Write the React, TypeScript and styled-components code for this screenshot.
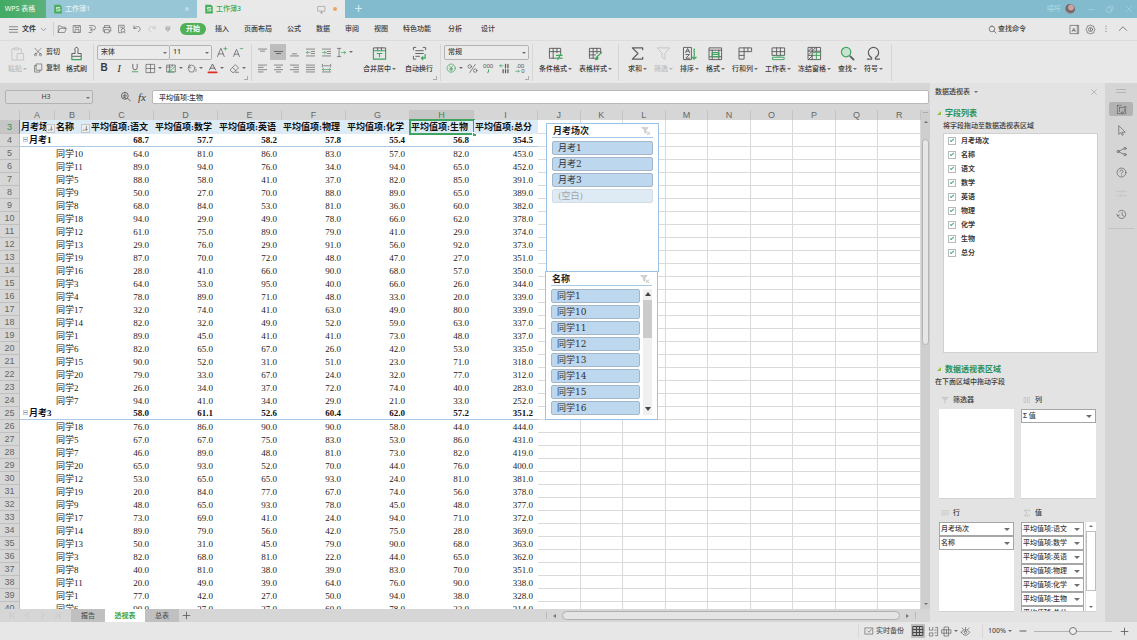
import React from "react";
import styled, { createGlobalStyle, css } from "styled-components";

const GREEN = "#3fa45f";
const INK = "#3a3a3a";
const UI = '"Noto Sans", "Noto Sans CJK SC", sans-serif';
const SHEET = '"Liberation Serif", "Noto Sans CJK SC", serif';

const Global = createGlobalStyle`
  *, *::before, *::after { box-sizing: border-box; }
  body { margin: 0; background: #e8e8e8; font-family: ${UI}; font-size: 7px; color: ${INK}; }
  button, input, select { font: inherit; color: inherit; border: 0; margin: 0; padding: 0; background: none; }
  h2, h3 { margin: 0; }
`;

/* ---------- icons ---------- */

const Svg = styled.svg<{ $s: number }>`
  display: block;
  flex: none;
  width: ${(p) => p.$s}px;
  height: ${(p) => p.$s}px;
  fill: none;
  stroke: #5d5d5d;
  stroke-width: 1;
  stroke-linecap: round;
  stroke-linejoin: round;
  .g { stroke: ${GREEN}; }
  .t { fill: #5d5d5d; stroke: none; font-family: "Liberation Sans", sans-serif; }
`;

const art: Record<string, React.ReactNode> = {
  menu: <path d="M2 4h12M2 8h12M2 12h12" />,
  chevron: <path d="M4 6l4 4 4-4" />,
  open: <path d="M2 13V3h4l1.500 2H13v2M2 13l2.500-6H15l-2.500 6z" />,
  save: <path d="M2.500 2.500h11v11h-11zM5 2.500v3h6v-3M5 13.500V8.500h6v5" />,
  exportDoc: <path d="M4 2.500h6a3.500 3.500 0 010 7H6M4 6h4M8 7.500l-2 2 2 2M3 13.500h4" />,
  print: <path d="M4 5.500v-3h8v3M4 11.500H2v-6h12v6h-2M4.500 9h7v5h-7z" />,
  preview: <path d="M8 14H2.500V2h9v4M5 5h4M13 14.500l-2-2M9.500 7a3 3 0 100 6 3 3 0 000-6z" />,
  undo: <path d="M3 3v4h4M3 7c2-4 10-4 10 1 0 2-1 3.500-3 4.500" />,
  redo: <path stroke="#bdbdbd" d="M13 3v4H9M13 7c-2-4-10-4-10 1 0 2 1 3.500 3 4.500" />,
  more: <path d="M4 4h8M4 7.500h8l-4 4.500z" />,
  search: <path strokeWidth="1.300" d="M7 2a5 5 0 100 10A5 5 0 007 2zM10.500 10.500l4 4" />,
  skin: <><path d="M2 2h12v12H2zM12 2v12" /><path d="M4.500 11l2.500-5 2 5M5.500 9.500h3" /></>,
  gear: <><path d="M8 1.500l2 1 2.500.5.500 2.500 1.500 2.500-1.500 2.500-.5 2.500-2.500.5-2 1-2-1-2.500-.5-.5-2.500L1.500 8 3 5.500 3.500 3 6 2.500z" /><circle cx="8" cy="8" r="3" /><path d="M8 6.500v3" /></>,
  dots: <path strokeWidth="1.500" strokeDasharray="0.100 4" d="M8 3.500v9" />,
  up: <path d="M3 10l5-5 5 5" />,
  paste: <g stroke="#c4c4c4"><path d="M5 3H2v12h5M5 2h4v2H5zM9 3h3v4M8 8h6.500v7H8z" /></g>,
  cut: <path d="M3 2l8.500 9M13 2l-8.500 9M4 10.500a1.800 1.800 0 100 3.600 1.800 1.800 0 000-3.600zM12 10.500a1.800 1.800 0 100 3.600 1.800 1.800 0 000-3.600z" />,
  copy: <path d="M5.500 1.500h8.500v10H5.500zM5.500 4H2.500v10.500h8.500v-3" />,
  brush: <><path d="M8 1.500c2 0 2 2 1.500 4V8H13v3H3V8h3.500V5.500C6 3.500 6 1.500 8 1.500z" /><path className="g" strokeWidth="1.300" d="M3 11v3.500h10V11" /></>,
  growA: <><path d="M2 14L6.500 3 11 14M3.500 10.500h6" /><path className="g" d="M10.500 3.500h4M12.500 1.500v4" /></>,
  shrinkA: <><path d="M2 14L6 4.500 10 14M3.500 11h5" /><path className="g" d="M11 3.500h3.500" /></>,
  underline: <><path strokeWidth="1.400" d="M4.500 2v5.500a3.500 3.500 0 007 0V2" /><path className="g" strokeWidth="1.400" d="M3.500 14h9" /></>,
  borders: <path d="M2 2h12v12H2zM8 2v12M2 8h12" />,
  fillPat: <><path d="M1.500 3h12v10h-12zM1.500 6h6M5 3v10M9 3v2" /><path className="g" strokeWidth="1.300" d="M7 11l6-6M3 13h8M6 9l-2 3" /></>,
  bucket: <path d="M3.500 6.500a5 5 0 019.500 0M13 6.500L11 13H5.500L3 8M5 2.500L3.500 6.500 7 7M14.500 9v3" />,
  fontColor: <><path strokeWidth="1.300" d="M3.500 10L8 1.500 12.500 10M5 7.500h6" /><path stroke="#e02b20" strokeWidth="2.600" d="M2 13.500h12" /></>,
  eraser: <path d="M2 9.500L9 2.500l5 4.500-6.500 6.500H5zM5 6.500l5 4.500M9 13.500h5" />,
  vTop: <path d="M2 3h12M5 6h6" />,
  vMid: <path strokeWidth="1.300" d="M2 6.500h12M5 9.500h6" />,
  vBot: <path d="M5 10h6M2 13h12" />,
  indentL: <><path d="M2 3h12M9 6.500h5M9 9.500h5M2 13h12" /><path className="g" d="M7 8H2M4 6L2 8l2 2" /></>,
  indentR: <><path d="M2 3h12M9 6.500h5M9 9.500h5M2 13h12" /><path className="g" d="M2 8h5M5 6l2 2-2 2" /></>,
  orient: <><path d="M2 2h5M4.500 2v12M2 14h5" /><path className="g" d="M8 8h6M12 6l2 2-2 2" /></>,
  left: <path d="M2 3h12M2 6.300h7M2 9.700h12M2 13h7" />,
  center: <path d="M2 3h12M5 6.300h6M2 9.700h12M5 13h6" />,
  right: <path d="M2 3h12M7 6.300h7M2 9.700h12M7 13h7" />,
  justify: <path d="M2 3h12M2 6.300h12M2 9.700h12M2 13h12" />,
  distribute: <><path d="M2 2v4M14 2v4M4 4h8M2 13h12" /><path className="g" d="M2 9.500h12M4 8L2 9.500 4 11M12 8l2 1.500-2 1.500" /></>,
  merge: <><path d="M1.500 5V2h13v3M6 2v3M10 2v3" /><path className="g" strokeWidth="1.200" d="M1.500 5h13v9h-13zM5.500 8h5M8 8v3.500" /></>,
  wrap: <><path d="M1.500 4V1.500H4M12 1.500h2.500V4M1.500 11v3H4M4 5h8M4 8h8M4 11h4" /><path className="g" strokeWidth="1.300" d="M14 9v4h-4M11.500 11.500L10 13l1.500 1.500" /></>,
  currency: <><circle className="g" cx="7.500" cy="7.500" r="6" /><path className="g" d="M5 4l2.500 3L10 4M7.500 7v5M5.500 8h4M5.500 10h4" /></>,
  percent: <><circle cx="4" cy="5" r="2.500" /><circle cx="12" cy="11" r="2.500" /><path d="M12 2L4 14" /></>,
  thousands: <><text className="t" x="0" y="7" fontSize="9">000</text><path className="g" strokeWidth="1.500" d="M8 10v2l-1 2" /></>,
  decMore: <><path className="g" d="M1 4h5M3 2L1 4l2 2" /><path strokeDasharray="5 2.500" strokeWidth="1.800" d="M9.500 2v12M13 2v12M6 9.500v4.500" /></>,
  decLess: <><text className="t" x="1" y="7" fontSize="9">.00</text><text className="t" x="9" y="15" fontSize="9">0</text><path className="g" d="M1 12h5M4.500 10.500L6 12l-1.500 1.500" /></>,
  condFmt: <><path d="M8 13H1.500V2.500h12V8M1.500 6h12M5.500 2.500V13M9.500 2.500V7" /><path className="g" strokeWidth="1.300" d="M9 10h6M9 13h6M13.500 8.500l-3 6" /></>,
  tblStyle: <><path d="M7 13H1.500V2.500h12V7M1.500 6h12M1.500 9.500H8M5.500 2.500V13M9.500 2.500V8" /><path className="g" strokeWidth="1.300" d="M9 12l5.500-5M8 14.500c0-2 1-2.500 2-2.500s1 2.500-2 2.500z" /></>,
  sum: <path strokeWidth="1.300" d="M13.500 4V2H2.500l6 6-6 6h11v-2" />,
  filter: <path stroke="#c4c4c4" d="M1.500 2h13L9.500 8v6l-3-2V8z" />,
  sort: <><path d="M2 1.500h8v13H2z" /><path d="M4 7l2-4.500L8 7M4.500 5.500h3M4 9h4l-4 4h4" /><path className="g" strokeWidth="1.300" d="M13 3v11M11 12l2 2 2-2" /></>,
  format: <><path d="M1.500 2h13v12.500h-13zM1.500 4.500h13M4.500 4.500v10M11.500 4.500v10M1.500 11.500h13" /><path className="g" strokeWidth="1.200" d="M4.500 7h7v4.500h-7zM4.500 9h7" /></>,
  rowCol: <path d="M1.500 2h13v4h-8v8h-5zM1.500 6h5M6.500 2v4M10.500 2v4M1.500 10h5" />,
  worksheet: <><path d="M1.500 2h13v8h-13zM1.500 6h13M6 2v8M10 2v8" /><path className="g" d="M2 12h12v2.500H2zM6 10.500h5" /></>,
  freeze: <><path d="M1.500 1.500h13v13h-13zM1.500 5.500h13M1.500 10h5M5.500 1.500v13M10 1.500v4M2 5l3-3M6 5l3-3M2 9l3-3M2 14l3-3" /><path className="g" d="M6.500 7h8M6.500 10h8M10 7v7" /></>,
  find: <><circle className="g" cx="6.500" cy="6.500" r="5" fill="#c9e3d1" strokeWidth="1.300" /><path strokeWidth="2" d="M11 11l3.500 3.500" /></>,
  symbol: <path strokeWidth="1.200" d="M1.500 14H6v-1.500C3.500 11 2.500 9 2.500 7a5.500 5.500 0 0111 0c0 2-1 4-3.500 5.500V14h4.500" />,
  zoomDoc: <path strokeWidth="1.300" d="M7 2a5 5 0 100 10A5 5 0 007 2zM11 10.500l4 4M4.500 7h5M7 4.500v5M5 9l4 2" />,
  wpsDoc: <><path fill="#44ad58" stroke="none" d="M2 1h9l3 3v11H2z" /><path stroke="#e9f5ec" strokeWidth="1.400" d="M11 5.500H5.500V8H11v3H5.500" /></>,
  monitor: <path stroke="#8c8c8c" d="M2 2.500h12v8.500H2zM6 14h4M8 11v3" />,
  pivot: <><path strokeDasharray="2 1.500" d="M2 2h6M2 2v12M14 8v6H2" /><path d="M5 5h5M5 5v6M9 13c4 0 4-4 4-9M11 5.500L13 3l2 2.500M9 11l-2 2 2 1.500" /></>,
  cursor: <path d="M4 1.500v12l3-2.500 2 4 1.500-1-1.500-3.500h4z" />,
  share: <><circle cx="3" cy="8" r="1.700" /><circle cx="13" cy="3.500" r="1.700" /><circle cx="13" cy="12.500" r="1.700" /><path d="M4.500 7.300L11.500 4M4.500 8.700L11.500 12" /></>,
  help: <><circle cx="8" cy="8" r="6.500" /><path d="M5.700 6.500c0-3 4.600-3 4.600 0C10.300 8 8 8 8 9.700M8 11.700v.2" /></>,
  sliders: <path stroke="#bfbfbf" d="M1 5h9M13 5h2M10 3v4M1 11h2M6 11h9M6 9v4" />,
  history: <path d="M3.500 4a6 6 0 11-1 6M1 7.500L2.500 10 5 8.500M9 5v4l2.500 1.500" />,
  clearFilter: <><path stroke="#c2c2c2" fill="#d4d4d4" d="M1.500 2.500h10L8 6.500V12L5.500 10V6.500z" /><path stroke="#b4b4b4" strokeWidth="1.300" d="M10 9.500l4 4.500M14 9.500L10 14" /></>,
  clock: <path d="M2 3h12v10H2zM6 8l2 2 4-5" />,
  gridView: <path stroke="#444" strokeWidth="1.300" d="M1.500 2h13v12h-13zM1.500 6h13M1.500 10h13M6 2v12M10 2v12" />,
  pageView: <path d="M2 2v4h5V2M2 14v-4h5v4zM11 2h3v12h-3M10 6h2M10 10h2" />,
  splitView: <path d="M5 1.500h6v13H5zM1.500 5.500h13v5h-13zM8 5.500v5" />,
  eye: <path d="M2 9c3-5 9-5 12 0-3 6-9 6-12 0zM8 7a2 2 0 100 4 2 2 0 000-4zM3 3l2 2M13 3l-2 2M8 2v2" />,
  first: <path stroke="#bbb" d="M4 3v10M12 3L7 8l5 5" />,
  prev: <path stroke="#bbb" d="M10 3L5 8l5 5" />,
  next: <path stroke="#bbb" d="M6 3l5 5-5 5" />,
  last: <path stroke="#bbb" d="M4 3l5 5-5 5M12 3v10" />,
  plus: <path strokeWidth="1.500" d="M8 2v12M2 8h12" />,
  minus: <path strokeWidth="2" d="M2 8h12" />,
  winMin: <path stroke="#b5dbe6" d="M2 9h12" />,
  winMax: <path stroke="#b5dbe6" d="M2 5.500h8.500V14H2zM5.500 5V2H14v8.500h-3" />,
  winClose: <path stroke="#b5dbe6" d="M3 3l10 10M13 3L3 13" />,
  close: <path stroke="#8f8f8f" d="M3 3l10 10M13 3L3 13" />,
  funnel: <path stroke="#b9b9b9" strokeWidth="1.500" d="M2 3h12M4 6h8M8 6v8" />,
  cols: <path stroke="#c2c2c2" strokeWidth="1.500" d="M3 3h3v10H3zM10 3h3v10h-3z" />,
  rows: <path stroke="#bcbcbc" d="M1 3h14M1 6h14M1 9h14M1 12h14" />,
  sigma: <path stroke="#b9b9b9" strokeWidth="1.500" d="M13 4V2.500H3L8 8l-5 5.500h10V12" />,
  sortDown: <path stroke="#666" strokeWidth="1.600" d="M10 3v9M7.500 9.500L10 12l2.500-2.500M3 12h2" />,
};

const Icon = ({ n, s = 12 }: { n: string; s?: number }) => (
  <Svg $s={s} viewBox="0 0 16 16" aria-hidden="true">{art[n]}</Svg>
);

const Caret = styled.span<{ $up?: boolean; $big?: boolean; $dim?: boolean }>`
  flex: none;
  width: 0;
  height: 0;
  border: ${(p) => (p.$big ? 3 : 2)}px solid transparent;
  ${(p) => (p.$up ? "border-bottom" : "border-top")}-color: ${(p) => (p.$dim ? "#b5b5b5" : "#6e6e6e")};
  ${(p) => (p.$up ? "border-top" : "border-bottom")}-width: 0;
`;

const SideCaret = styled.span<{ $right?: boolean }>`
  width: 0;
  height: 0;
  border: 2px solid transparent;
  ${(p) => (p.$right ? "border-left" : "border-right")}: 3px solid #777;
  ${(p) => (p.$right ? "border-right" : "border-left")}-width: 0;
`;

/* ---------- frame ---------- */

const App = styled.div`
  display: flex;
  flex-direction: column;
  height: 100vh;
  overflow: hidden;
  line-height: 10px;
`;

const TitleBar = styled.header`
  display: flex;
  flex: none;
  height: 18px;
  background: #82bbcd;
`;

const HomeTab = styled.button`
  width: 46px;
  padding-right: 6px;
  color: #e2f3e6;
  background: linear-gradient(90deg, #41aa63, #5bb27b);
  font-weight: 500;
`;

const BookTab = styled.button<{ $active?: boolean }>`
  display: flex;
  align-items: center;
  gap: 2px;
  width: ${(p) => (p.$active ? 148 : 151)}px;
  padding: 0 8px 0 7px;
  background: ${(p) => (p.$active ? "#e9e9e9" : "#97c6d6")};
  color: ${(p) => (p.$active ? "#3fa94f" : "#e4f2f6")};
  font-weight: 500;
`;

const TabState = styled.span`
  display: flex;
  align-items: center;
  gap: 7px;
  margin-left: auto;
`;

const Dot = styled.span<{ $c: string }>`
  width: 4px;
  height: 4px;
  border-radius: 50%;
  background: ${(p) => p.$c};
`;

const AddBook = styled.button`
  width: 27px;
  color: #d6ecf2;
  font-size: 14px;
  line-height: 18px;
`;

const WindowTools = styled.div`
  display: flex;
  align-items: center;
  gap: 9px;
  margin-left: auto;
  padding-right: 3px;
  color: #b5dbe6;
`;

const User = styled.span`
  display: flex;
  align-items: center;
  gap: 4px;
  margin-right: 2px;
`;

const Avatar = styled.span`
  width: 10px;
  height: 10px;
  border-radius: 50%;
  background: radial-gradient(circle at 60% 35%, #c9a6a0 0 25%, #6b5a60 45%, #b9b3b6 90%);
`;

const IconButton = styled.button<{ $on?: boolean; $w?: number }>`
  display: flex;
  flex: none;
  align-items: center;
  justify-content: center;
  gap: 2px;
  width: ${(p) => p.$w ?? 10}px;
  align-self: stretch;
  ${(p) => p.$on && css`background: #bdbdbd; border-radius: 1px;`}
`;

const MenuBar = styled.nav`
  display: flex;
  flex: none;
  align-items: center;
  height: 23px;
  padding: 0 8px;
  background: #e8e8e8;
  border-bottom: 1px solid #dcdcdc;
  font-weight: 500;
`;

const FileMenu = styled.button`
  display: flex;
  align-items: center;
  gap: 3px;
  height: 14px;
  padding-right: 5px;
  border-right: 1px solid #cfcfcf;
  font-weight: 700;
`;

const QuickTools = styled.div`
  display: flex;
  gap: 5px;
  padding: 0 6px 0 3px;
`;

const RibbonTabs = styled.div`
  display: flex;
  align-items: center;
  gap: 15px;
`;

const RibbonTab = styled.button<{ $context?: boolean; $active?: boolean }>`
  padding: 0 ${(p) => (p.$context ? 2 : 0)}px;
  font-weight: 500;
  ${(p) =>
    p.$active &&
    css`
      height: 12px;
      margin-right: -6px;
      padding: 0 6px;
      border-radius: 6px;
      background: #4fb054;
      color: #fff;
      font-weight: 700;
    `}
`;

const MenuTools = styled.div`
  display: flex;
  align-items: center;
  gap: 6px;
  margin-left: auto;
`;

const FindCommand = styled.button`
  display: flex;
  align-items: center;
  gap: 1px;
  margin-right: 37px;
  font-weight: 500;
`;

/* ---------- ribbon ---------- */

const Ribbon = styled.div`
  display: flex;
  flex: none;
  height: 42px;
  padding: 3px 0 2px 4px;
  background: #e8e8e8;
  font-weight: 500;
`;

const Group = styled.section<{ $gap?: number; $pad?: string; $launcher?: boolean }>`
  position: relative;
  display: flex;
  flex: none;
  gap: ${(p) => p.$gap ?? 0}px;
  padding: ${(p) => p.$pad ?? "0 6px"};
  border-right: 1px solid #d6d6d6;
  ${(p) =>
    p.$launcher &&
    css`
      &::after {
        content: "";
        position: absolute;
        right: 3px;
        bottom: 1px;
        width: 4px;
        height: 4px;
        border: solid #aaa;
        border-width: 0 1px 1px 0;
      }
    `}
`;

const Tall = styled.button<{ $off?: boolean }>`
  display: flex;
  flex: none;
  flex-direction: column;
  align-items: center;
  gap: 3px;
  padding-top: 2px;
  font-weight: 500;
  color: ${(p) => (p.$off ? "#bcbcbc" : INK)};
  align-self: flex-start;
`;

const Label = styled.span`
  display: flex;
  align-items: center;
  gap: 1px;
  white-space: nowrap;
`;

const Stack = styled.div`
  display: flex;
  flex: none;
  flex-direction: column;
`;

const Line = styled.div`
  display: flex;
  align-items: center;
  height: 16px;
`;

const Inline = styled.button`
  display: flex;
  align-items: center;
  gap: 3px;
  height: 16px;
  font-weight: 500;
`;

const Combo = styled.span<{ $w: number; $join?: boolean }>`
  position: relative;
  display: flex;
  align-items: center;
  flex: none;
  width: ${(p) => p.$w}px;
  height: 15px;
  border: 1px solid #b3b3b3;
  border-left-width: ${(p) => (p.$join ? 0 : 1)}px;
  border-radius: ${(p) => (p.$join ? "0 2px 2px 0" : "2px")};
  background: #ebebeb;
  select, input {
    appearance: none;
    width: 100%;
    height: 100%;
    padding-left: 3px;
    outline: 0;
  }
  input { text-align: center; padding: 0 6px 0 0; }
  ${Caret} { position: absolute; right: 2px; top: 6px; pointer-events: none; }
`;

const Glyph = styled.span<{ $i?: boolean }>`
  font: ${(p) => (p.$i ? 'italic 400 11px/12px "Liberation Serif", serif' : '700 10px/12px "Liberation Sans", sans-serif')};
`;

const BigButton = ({ icon, text, caret = true, off }: { icon: string; text: string; caret?: boolean; off?: boolean }) => (
  <Tall $off={off}>
    <Icon n={icon} s={15} />
    <Label>{text}{caret && <Caret $dim={off} />}</Label>
  </Tall>
);

const Tool = ({ n, w = 16, caret, on, s = 11 }: { n: string; w?: number; caret?: boolean; on?: boolean; s?: number }) => (
  <IconButton $w={w} $on={on} aria-label={n}>
    <Icon n={n} s={s} />
    {caret && <Caret />}
  </IconButton>
);

/* ---------- workspace ---------- */

const Workspace = styled.div`
  display: flex;
  flex: 1;
  min-height: 0;
  background: #d6d6d6;
`;

const BookArea = styled.main`
  display: flex;
  flex: 1;
  flex-direction: column;
  min-width: 0;
`;

const FormulaBar = styled.div`
  display: flex;
  align-items: center;
  flex: none;
  height: 27px;
  padding: 0 1px 0 5px;
  ${Combo} { height: 14px; background: #dadada; }
`;

const FormulaTools = styled.div`
  display: flex;
  align-items: center;
  gap: 5px;
  margin-left: 27px;
`;

const FormulaInput = styled.input`
  flex: 1;
  height: 14px;
  margin-left: 4px;
  padding: 0 6px;
  border: 1px solid #b9b9b9;
  border-radius: 2px;
  background: #fff;
  font-weight: 500;
`;

const SheetRow = styled.div`
  display: flex;
  flex: 1;
  min-height: 0;
`;

const Viewport = styled.div`
  position: relative;
  flex: 1;
  min-width: 0;
  overflow: hidden;
  background: #fff;
`;

const Grid = styled.table`
  width: 100%;
  table-layout: fixed;
  border-spacing: 0;
  font: 9px/12px ${SHEET};
  color: #222;
`;

const ColHead = styled.th<{ $on?: boolean }>`
  height: 10px;
  padding: 0;
  background: ${(p) => (p.$on ? "#c6c6c6" : "#d6d6d6")};
  border-right: 1px solid #c4c4c4;
  color: ${(p) => (p.$on ? "#2f8f4c" : "#666")};
  font: 9px/10px "Liberation Sans", sans-serif;
`;

const RowHead = styled.th<{ $on?: boolean }>`
  padding: 0;
  background: ${(p) => (p.$on ? "#c6c6c6" : "#d6d6d6")};
  border-bottom: 1px solid #c0c0c0;
  border-right: 1px solid ${(p) => (p.$on ? GREEN : "#bdbdbd")};
  color: ${(p) => (p.$on ? "#2f8f4c" : "#666")};
  font: 9px/12px "Liberation Sans", sans-serif;
`;

const Row = styled.tr<{ $kind?: "head" | "group" }>`
  height: ${(p) => (p.$kind === "head" ? 14 : 13)}px;
  ${(p) => p.$kind && css`font-weight: 700; color: #111;`}
`;

const Cell = styled.td<{ $kind?: string; $num?: boolean; $empty?: boolean; $picked?: boolean }>`
  position: relative;
  padding: 0 ${(p) => (p.$num ? 5 : 0)}px 0 ${(p) => (p.$num ? 0 : 1)}px;
  text-align: ${(p) => (p.$num ? "right" : "left")};
  white-space: nowrap;
  background: ${(p) => (p.$kind === "head" ? "#ddebf7" : "transparent")};
  ${(p) => p.$kind === "group" && css`border-bottom: 1px solid #a9c9e6;`}
  ${(p) => p.$empty && css`
    background: #fff;
    border-right: 1px solid #dadada;
    border-bottom: 1px solid #dadada;
  `}
  ${(p) => p.$picked && css`
    box-shadow: inset 0 0 0 1px #3fa45f;
    outline: 1px solid #3fa45f;
    &::after {
      content: "";
      position: absolute;
      right: -2px;
      bottom: -2px;
      width: 4px;
      height: 4px;
      background: #3fa45f;
      border: solid #fff;
      border-width: 1px 0 0 1px;
    }
  `}
`;

const SortButton = styled.button`
  position: absolute;
  right: 0;
  bottom: 1px;
  width: 9px;
  height: 9px;
  border: 1px solid #c5c5c5;
  background: #efefef;
`;

const Toggle = styled.button`
  position: relative;
  width: 5px;
  height: 5px;
  margin: 0 1px 2px 2px;
  border: 1px solid #b9cfe3;
  vertical-align: middle;
  &::after {
    content: "";
    position: absolute;
    inset: 1px 0 auto;
    height: 1px;
    background: #7d8fa0;
  }
`;

const Slicer = styled.section<{ $x: number; $y: number }>`
  position: absolute;
  left: ${(p) => p.$x}px;
  top: ${(p) => p.$y}px;
  display: flex;
  flex-direction: column;
  width: 113px;
  height: 149px;
  padding: 1px 5px 4px;
  border: 1px solid #9cc3e5;
  background: #fff;
`;

const SlicerTitle = styled.h3`
  display: flex;
  align-items: center;
  justify-content: space-between;
  flex: none;
  height: 13px;
  padding: 0 2px 0 1px;
  border-bottom: 1px solid #a5c8e8;
  font: 700 9px/12px ${SHEET};
  color: #222;
`;

const SlicerBody = styled.div`
  display: flex;
  justify-content: space-between;
  flex: 1;
  min-height: 0;
  margin-top: 3px;
`;

const SlicerItems = styled.div`
  display: flex;
  flex: 1;
  flex-direction: column;
  gap: 2px;
  overflow: hidden;
`;

const SlicerItem = styled.button<{ $off?: boolean }>`
  flex: none;
  height: 14px;
  padding-left: 5px;
  border: 1px solid ${(p) => (p.$off ? "#d3dde6" : "#a3b7c9")};
  border-radius: 2px;
  background: ${(p) => (p.$off ? "#deebf5" : "#bdd7ee")};
  color: ${(p) => (p.$off ? "#a5a5a5" : "#333")};
  font: 9px/12px "DejaVu Serif", "Noto Sans CJK SC", serif;
  text-align: left;
`;

const SlicerScroll = styled.div`
  display: flex;
  flex-direction: column;
  align-items: center;
  width: 9px;
  margin-left: 3px;
  padding: 3px 0 4px;
  background: #f0f0f0;
  i { flex: none; width: 9px; height: 38px; margin: 4px 0 auto; background: #cbcbcb; }
  ${Caret} { border-width: 3px; border-top-color: #444; border-bottom-color: transparent; border-bottom-width: 0; border-top-width: 4px; }
  ${Caret}:first-child { border-bottom: 4px solid #444; border-top-width: 0; }
`;

const VScroll = styled.div`
  display: flex;
  flex: none;
  flex-direction: column;
  align-items: center;
  width: 9px;
  padding: 2px 0 4px;
  background: #cecece;
  hr { width: 5px; margin: 0 0 8px; border: 0; border-top: 1px solid #aaa; }
  i { flex: none; width: 7px; height: 206px; margin: 16px 0 auto; border: 1px solid #b5b5b5; border-radius: 4px; background: #e6e6e6; }
`;

const SheetBar = styled.div`
  display: flex;
  flex: none;
  align-items: stretch;
  height: 13px;
`;

const SheetNav = styled.div`
  display: flex;
  gap: 5px;
  width: 71px;
  padding-left: 7px;
`;

const SheetTab = styled.button<{ $active?: boolean }>`
  width: ${(p) => (p.$active ? 40 : 34)}px;
  background: ${(p) => (p.$active ? "#fff" : "#c0c0c0")};
  color: ${(p) => (p.$active ? "#37a447" : "#555")};
  font-weight: ${(p) => (p.$active ? 700 : 500)};
`;

const HScroll = styled.div`
  display: flex;
  align-items: center;
  gap: 6px;
  width: 392px;
  margin-left: auto;
  padding: 0 14px 0 8px;
  hr { width: 1px; height: 7px; margin: 0; border: 0; background: #bbb; }
  i { flex: 1; height: 9px; border: 1px solid #b0b0b0; border-radius: 5px; background: #e4e4e4; }
`;

/* ---------- pivot pane ---------- */

const Pane = styled.aside`
  flex: none;
  width: 175px;
  padding: 4px 7px 0 5px;
  background: #e3e3e3;
  font-weight: 500;
`;

const PaneHead = styled.div`
  display: flex;
  align-items: center;
  justify-content: space-between;
  height: 10px;
`;

const PaneTitle = styled.h2`
  display: flex;
  align-items: center;
  gap: 4px;
  font: 500 7px/10px ${UI};
`;

const SectionTitle = styled.h3`
  display: flex;
  align-items: center;
  gap: 4px;
  height: 12px;
  margin-top: 10px;
  padding-left: 2px;
  font: 700 8px/12px ${UI};
  color: #27905a;
  &::before {
    content: "";
    border: solid transparent;
    border-width: 0 0 4px 4px;
    border-bottom-color: #8cc63f;
  }
`;

const Hint = styled.p<{ $in?: boolean }>`
  margin: 0;
  padding-left: ${(p) => (p.$in ? 8 : 0)}px;
  line-height: 14px;
`;

const FieldList = styled.div`
  height: 220px;
  margin-left: 8px;
  padding: 0 4px;
  border: 1px solid #d0d0d0;
  background: #fff;
`;

const Field = styled.label`
  display: flex;
  align-items: center;
  gap: 5px;
  height: 14px;
  font-weight: 700;
  input {
    appearance: none;
    position: relative;
    width: 8px;
    height: 8px;
    border: 1px solid #b9b9b9;
    background: #fff;
  }
  input:checked::after {
    content: "";
    position: absolute;
    left: 2px;
    top: 0;
    width: 2px;
    height: 4px;
    border: solid #3fa477;
    border-width: 0 1px 1px 0;
    transform: rotate(45deg);
  }
`;

const Areas = styled.div`
  display: grid;
  grid-template-columns: 75px 75px;
  column-gap: 7px;
  margin-top: 6px;
  padding-left: 4px;
`;

const AreaHead = styled.h3`
  display: flex;
  align-items: center;
  gap: 4px;
  height: 10px;
  margin-bottom: 4px;
  padding-left: 2px;
  font: 500 7px/10px ${UI};
`;

const AreaBox = styled.div`
  display: flex;
  height: 90px;
  margin-bottom: 9px;
  border-bottom: 1px solid #d2d2d2;
  background: #fff;
  overflow: hidden;
`;

const Chips = styled.div`
  display: flex;
  flex: 1;
  flex-direction: column;
  min-width: 0;
`;

const Chip = styled.button`
  display: flex;
  flex: none;
  align-items: center;
  justify-content: space-between;
  height: 14px;
  padding: 0 3px 0 1px;
  border: 1px solid #a6a6a6;
  background: #fff;
  white-space: nowrap;
  font-weight: 500;
`;

const AreaScroll = styled.div`
  display: flex;
  flex-direction: column;
  align-items: center;
  justify-content: space-between;
  width: 11px;
  margin-left: 1px;
  padding: 3px 0;
  border-left: 1px solid #ddd;
  i { width: 10px; height: 60px; margin: 4px 0 auto; border: 1px solid #bdbdbd; background: #fff; }
`;

const Rail = styled.aside`
  display: flex;
  flex: none;
  flex-direction: column;
  align-items: center;
  gap: 7px;
  width: 32px;
  padding-top: 6px;
  background: #d5d5d5;
`;

const RailGrip = styled.span`
  width: 10px;
  height: 4px;
  margin-bottom: 2px;
  border: solid #b5b5b5;
  border-width: 1px 0;
`;

const RailButton = styled.button<{ $on?: boolean }>`
  display: grid;
  place-items: center;
  width: 24px;
  height: 14px;
  border-radius: 2px;
  background: ${(p) => (p.$on ? "#b3b3b3" : "transparent")};
`;

const RailRule = styled.hr`
  width: 26px;
  margin: 0;
  border: 0;
  border-top: 1px solid #c2c2c2;
`;

/* ---------- status bar ---------- */

const StatusBar = styled.footer`
  display: flex;
  flex: none;
  align-items: center;
  justify-content: flex-end;
  gap: 7px;
  height: 18px;
  padding: 2px 8px 2px 0;
  background: #e7e7e7;
`;

const ViewModes = styled.div`
  display: flex;
  align-self: stretch;
  gap: 3px;
  padding-right: 5px;
`;

const StatusButton = styled.button`
  display: flex;
  align-items: center;
  gap: 2px;
  padding-left: 5px;
  color: #555;
  border-left: 1px solid #d8d8d8;
  align-self: stretch;
  font-weight: 500;
`;

const ZoomRange = styled.input`
  appearance: none;
  width: 78px;
  height: 9px;
  background: linear-gradient(#b5b5b5, #b5b5b5) center / 100% 1px no-repeat;
  &::-webkit-slider-thumb {
    appearance: none;
    width: 8px;
    height: 8px;
    border: 1px solid #777;
    border-radius: 50%;
    background: #efefef;
  }
`;

/* ---------- data ---------- */

const subjects = ["语文", "数学", "英语", "物理", "化学", "生物", "总分"];
const letters = "ABCDEFGHIJKLMNOPQR".split("");
const blankCols = letters.slice(9);

type Rec = [string, number[], boolean?];
const records: Rec[] = [
  ["月考1", [68.7, 57.7, 58.2, 57.8, 55.4, 56.8, 354.5], true],
  ["同学10", [64, 81, 86, 83, 57, 82, 453]],
  ["同学11", [89, 94, 76, 34, 94, 65, 452]],
  ["同学5", [88, 58, 41, 37, 82, 85, 391]],
  ["同学9", [50, 27, 70, 88, 89, 65, 389]],
  ["同学8", [68, 84, 53, 81, 36, 60, 382]],
  ["同学18", [94, 29, 49, 78, 66, 62, 378]],
  ["同学12", [61, 75, 89, 79, 41, 29, 374]],
  ["同学13", [29, 76, 29, 91, 56, 92, 373]],
  ["同学19", [87, 70, 72, 48, 47, 27, 351]],
  ["同学16", [28, 41, 66, 90, 68, 57, 350]],
  ["同学3", [64, 53, 95, 40, 66, 26, 344]],
  ["同学4", [78, 89, 71, 48, 33, 20, 339]],
  ["同学17", [32, 74, 41, 63, 49, 80, 339]],
  ["同学14", [82, 32, 49, 52, 59, 63, 337]],
  ["同学1", [89, 45, 41, 41, 73, 48, 337]],
  ["同学6", [82, 65, 67, 26, 42, 53, 335]],
  ["同学15", [90, 52, 31, 51, 23, 71, 318]],
  ["同学20", [79, 33, 67, 24, 32, 77, 312]],
  ["同学2", [26, 34, 37, 72, 74, 40, 283]],
  ["同学7", [94, 41, 34, 29, 21, 33, 252]],
  ["月考3", [58, 61.1, 52.6, 60.4, 62, 57.2, 351.2], true],
  ["同学18", [76, 86, 90, 90, 58, 44, 444]],
  ["同学5", [67, 67, 75, 83, 53, 86, 431]],
  ["同学7", [46, 89, 48, 81, 73, 82, 419]],
  ["同学20", [65, 93, 52, 70, 44, 76, 400]],
  ["同学12", [53, 65, 65, 93, 24, 81, 381]],
  ["同学19", [20, 84, 77, 67, 74, 56, 378]],
  ["同学9", [48, 65, 93, 78, 45, 48, 377]],
  ["同学17", [73, 69, 41, 24, 94, 71, 372]],
  ["同学14", [89, 79, 56, 42, 75, 28, 369]],
  ["同学13", [50, 31, 45, 79, 90, 68, 363]],
  ["同学3", [82, 68, 81, 22, 44, 65, 362]],
  ["同学8", [40, 81, 38, 39, 83, 70, 351]],
  ["同学11", [20, 49, 39, 64, 76, 90, 338]],
  ["同学1", [77, 42, 27, 50, 94, 38, 328]],
  ["同学6", [90, 37, 27, 60, 78, 22, 314]],
];

const PivotGrid = () => (
  <Grid>
    <colgroup>
      <col width="20" />
      <col width="35" />
      <col width="35" />
      {subjects.map((s) => <col key={s} width="64" />)}
      {blankCols.map((c) => <col key={c} />)}
    </colgroup>
    <thead>
      <tr>
        <ColHead />
        {letters.map((l) => <ColHead key={l} $on={l === "H"}>{l}</ColHead>)}
      </tr>
    </thead>
    <tbody>
      <Row $kind="head">
        <RowHead $on>3</RowHead>
        <Cell $kind="head">月考场<SortButton aria-label="月考场次"><Icon n="sortDown" s={7} /></SortButton></Cell>
        <Cell $kind="head">名称<SortButton aria-label="名称"><Icon n="sortDown" s={7} /></SortButton></Cell>
        {subjects.map((s) => <Cell key={s} $kind="head" $picked={s === "生物"}>平均值项:{s}</Cell>)}
        {blankCols.map((c) => <Cell key={c} $empty />)}
      </Row>
      {records.map(([name, values, group], i) => (
        <Row key={i} $kind={group ? "group" : undefined}>
          <RowHead>{i + 4}</RowHead>
          <Cell $kind={group ? "group" : undefined}>{group && <><Toggle aria-label="折叠" />{name}</>}</Cell>
          <Cell $kind={group ? "group" : undefined}>{!group && name}</Cell>
          {values.map((v, j) => <Cell key={j} $num $kind={group ? "group" : undefined}>{v.toFixed(1)}</Cell>)}
          {blankCols.map((c) => <Cell key={c} $empty />)}
        </Row>
      ))}
    </tbody>
  </Grid>
);

const ribbonRight: [string, string, boolean?][] = [
  ["sum", "求和"], ["filter", "筛选", true], ["sort", "排序"], ["format", "格式"], ["rowCol", "行和列"],
  ["worksheet", "工作表"], ["freeze", "冻结窗格"], ["find", "查找"], ["symbol", "符号"],
];

export default function Spreadsheet() {
  return (
    <App>
      <Global />
      <TitleBar>
        <HomeTab>WPS 表格</HomeTab>
        <BookTab><Icon n="wpsDoc" s={10} />工作薄1<TabState><Dot $c="#b9dbe6" /></TabState></BookTab>
        <BookTab $active><Icon n="wpsDoc" s={10} />工作薄3<TabState><Icon n="monitor" s={9} /><Dot $c="#e9a86a" /></TabState></BookTab>
        <AddBook aria-label="新建">+</AddBook>
        <WindowTools>
          <User>嘻吁<Avatar /></User>
          <Tool n="winMin" w={10} s={8} />
          <Tool n="winMax" w={10} s={8} />
          <Tool n="winClose" w={10} s={8} />
        </WindowTools>
      </TitleBar>

      <MenuBar>
        <FileMenu><Icon n="menu" s={11} />文件<Icon n="chevron" s={9} /></FileMenu>
        <QuickTools>
          {["open", "save", "exportDoc", "print", "preview", "undo", "redo"].map((n) => <Tool key={n} n={n} w={10} s={10} />)}
          <Tool n="more" w={12} s={8} />
        </QuickTools>
        <RibbonTabs>
          <RibbonTab $active>开始</RibbonTab>
          {["插入", "页面布局", "公式", "数据", "审阅", "视图", "特色功能"].map((t) => <RibbonTab key={t}>{t}</RibbonTab>)}
          <RibbonTab $context>分析</RibbonTab>
          <RibbonTab $context>设计</RibbonTab>
        </RibbonTabs>
        <MenuTools>
          <FindCommand><Icon n="search" s={9} />查找命令</FindCommand>
          <Tool n="skin" w={10} s={11} />
          <Tool n="gear" w={10} s={11} />
          <Tool n="dots" w={10} s={10} />
          <Tool n="up" w={12} s={12} />
        </MenuTools>
      </MenuBar>

      <Ribbon>
        <Group $gap={6} $pad="0 6px 0 4px">
          <BigButton icon="paste" text="粘贴" off />
          <Stack>
            <Inline><Icon n="cut" s={10} />剪切</Inline>
            <Inline><Icon n="copy" s={10} />复制</Inline>
          </Stack>
          <BigButton icon="brush" text="格式刷" caret={false} />
        </Group>

        <Group $pad="0 3px 0 3px" $launcher>
          <Stack>
            <Line>
              <Combo $w={73}><select aria-label="字体"><option>宋体</option></select><Caret /></Combo>
              <Combo $w={42} $join><select aria-label="字号"><option>11</option></select><Caret /></Combo>
              <Tool n="growA" w={20} s={12} />
              <Tool n="shrinkA" w={12} s={12} />
            </Line>
            <Line>
              <IconButton $w={14} aria-label="加粗"><Glyph>B</Glyph></IconButton>
              <IconButton $w={16} aria-label="倾斜"><Glyph $i>I</Glyph></IconButton>
              <Tool n="underline" w={16} s={10} />
              <Tool n="borders" w={21} caret />
              <Tool n="fillPat" w={20} caret />
              <Tool n="bucket" w={21} caret />
              <Tool n="fontColor" w={21} caret />
              <Tool n="eraser" w={22} caret />
            </Line>
          </Stack>
        </Group>

        <Group $pad="0 7px 0 2px" $gap={9} $launcher>
          <Stack>
            <Line>
              <Tool n="vTop" />
              <Tool n="vMid" on />
              <Tool n="vBot" />
              <Tool n="indentL" />
              <Tool n="indentR" />
              <Tool n="orient" w={20} caret />
            </Line>
            <Line>
              {["left", "center", "right", "justify", "distribute"].map((n) => <Tool key={n} n={n} />)}
            </Line>
          </Stack>
          <BigButton icon="merge" text="合并居中" />
          <BigButton icon="wrap" text="自动换行" caret={false} />
        </Group>

        <Group $pad="0 3px 0 3px" $launcher>
          <Stack>
            <Line><Combo $w={85}><select aria-label="数字格式"><option>常规</option></select><Caret /></Combo></Line>
            <Line>
              <Tool n="currency" w={20} caret />
              <Tool n="percent" />
              <Tool n="thousands" />
              <Tool n="decMore" />
              <Tool n="decLess" />
            </Line>
          </Stack>
        </Group>

        <Group $gap={7}>
          <BigButton icon="condFmt" text="条件格式" />
          <BigButton icon="tblStyle" text="表格样式" />
        </Group>

        <Group $gap={7} $pad="0 8px 0 9px">
          {ribbonRight.map(([icon, text, off]) => <BigButton key={text} icon={icon} text={text} off={off} />)}
        </Group>
      </Ribbon>

      <Workspace>
        <BookArea>
          <FormulaBar>
            <Combo $w={88}><input aria-label="名称框" defaultValue="H3" /><Caret /></Combo>
            <FormulaTools>
              <Tool n="zoomDoc" w={11} />
              <IconButton $w={12} aria-label="插入函数"><Glyph $i>fx</Glyph></IconButton>
            </FormulaTools>
            <FormulaInput aria-label="编辑栏" defaultValue="平均值项:生物" />
          </FormulaBar>
          <SheetRow>
            <Viewport>
              <PivotGrid />
              <Slicer $x={546} $y={13}>
                <SlicerTitle>月考场次<Icon n="clearFilter" s={10} /></SlicerTitle>
                <SlicerBody>
                  <SlicerItems>
                    <SlicerItem>月考1</SlicerItem>
                    <SlicerItem>月考2</SlicerItem>
                    <SlicerItem>月考3</SlicerItem>
                    <SlicerItem $off>(空白)</SlicerItem>
                  </SlicerItems>
                </SlicerBody>
              </Slicer>
              <Slicer $x={545} $y={161}>
                <SlicerTitle>名称<Icon n="clearFilter" s={10} /></SlicerTitle>
                <SlicerBody>
                  <SlicerItems>
                    {[1, 10, 11, 12, 13, 14, 15, 16].map((n) => <SlicerItem key={n}>同学{n}</SlicerItem>)}
                  </SlicerItems>
                  <SlicerScroll><Caret $up $big /><i /><Caret $big /></SlicerScroll>
                </SlicerBody>
              </Slicer>
            </Viewport>
            <VScroll><hr /><Caret $up /><i /><Caret /></VScroll>
          </SheetRow>
          <SheetBar>
            <SheetNav>
              {["first", "prev", "next", "last"].map((n) => <Tool key={n} n={n} w={10} s={9} />)}
            </SheetNav>
            <SheetTab>报告</SheetTab>
            <SheetTab $active>透视表</SheetTab>
            <SheetTab>总表</SheetTab>
            <Tool n="plus" w={14} s={9} />
            <HScroll><hr /><SideCaret /><i /><SideCaret $right /><hr /></HScroll>
          </SheetBar>
        </BookArea>

        <Pane>
          <PaneHead>
            <PaneTitle>数据透视表<Caret /></PaneTitle>
            <Tool n="close" w={8} s={8} />
          </PaneHead>
          <SectionTitle>字段列表</SectionTitle>
          <Hint $in>将字段拖动至数据透视表区域</Hint>
          <FieldList>
            {["月考场次", "名称", ...subjects].map((f) => (
              <Field key={f}><input type="checkbox" defaultChecked />{f}</Field>
            ))}
          </FieldList>
          <SectionTitle>数据透视表区域</SectionTitle>
          <Hint>在下面区域中拖动字段</Hint>
          <Areas>
            <div>
              <AreaHead><Icon n="funnel" s={8} />筛选器</AreaHead>
              <AreaBox />
            </div>
            <div>
              <AreaHead><Icon n="cols" s={8} />列</AreaHead>
              <AreaBox><Chips><Chip>Σ 值<Caret $big /></Chip></Chips></AreaBox>
            </div>
            <div>
              <AreaHead><Icon n="rows" s={8} />行</AreaHead>
              <AreaBox><Chips><Chip>月考场次<Caret $big /></Chip><Chip>名称<Caret $big /></Chip></Chips></AreaBox>
            </div>
            <div>
              <AreaHead><Icon n="sigma" s={8} />值</AreaHead>
              <AreaBox>
                <Chips>{subjects.map((s) => <Chip key={s}>平均值项:{s}<Caret $big /></Chip>)}</Chips>
                <AreaScroll><Caret $up /><i /><Caret /></AreaScroll>
              </AreaBox>
            </div>
          </Areas>
        </Pane>

        <Rail>
          <RailGrip />
          {["pivot", "cursor", "share", "help", "sliders", "history"].map((n, i) => (
            <RailButton key={n} $on={i === 0} aria-label={n}><Icon n={n} s={11} /></RailButton>
          ))}
          <RailRule />
        </Rail>
      </Workspace>

      <StatusBar>
        <StatusButton><Icon n="clock" s={10} />实时备份</StatusButton>
        <ViewModes>
          <Tool n="gridView" w={14} s={12} on />
          <Tool n="pageView" w={10} s={11} />
          <Tool n="splitView" w={16} s={11} caret />
          <Tool n="eye" w={10} s={11} />
        </ViewModes>
        <StatusButton>100%<Caret /></StatusButton>
        <Tool n="minus" w={8} s={8} />
        <ZoomRange type="range" aria-label="缩放" defaultValue={50} />
        <Tool n="plus" w={10} s={9} />
      </StatusBar>
    </App>
  );
}
